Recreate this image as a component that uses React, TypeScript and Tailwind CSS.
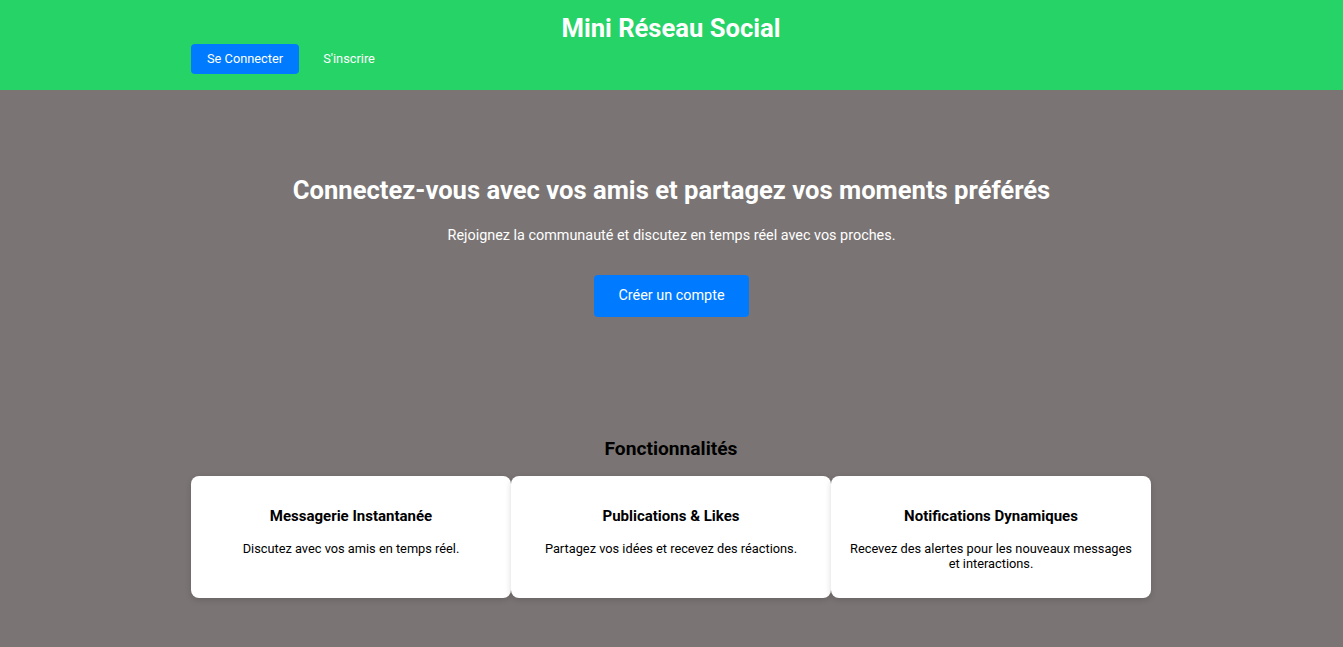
import React from "react";

const features = [
  { t: "Messagerie Instantanée", d: "Discutez avec vos amis en temps réel." },
  { t: "Publications & Likes", d: "Partagez vos idées et recevez des réactions." },
  { t: "Notifications Dynamiques", d: "Recevez des alertes pour les nouveaux messages et interactions." },
];

export default function App() {
  return (
    <div className="min-h-[647px] bg-[#7a7574] font-['Roboto',sans-serif]">
      <header className="bg-[#25d366] pt-[12px] pb-[16px]">
        <div className="mx-auto w-[961px] pr-[1px]">
          <h1 className="text-center text-[25.6px] font-bold leading-[32px] text-white">Mini Réseau Social</h1>
          <nav className="flex items-center gap-[8px]">
            <button className="h-[30px] rounded-[4px] bg-[#007bff] px-[16px] text-[12.8px] text-white">Se Connecter</button>
            <button className="h-[30px] px-[16px] text-[12.8px] text-white">S'inscrire</button>
          </nav>
        </div>
      </header>
      <section className="flex flex-col items-center pt-[85px] text-white">
        <h2 className="text-[25.6px] font-bold leading-[30px]">Connectez-vous avec vos amis et partagez vos moments préférés</h2>
        <p className="mt-[21px] text-[14.4px] leading-[20px]">Rejoignez la communauté et discutez en temps réel avec vos proches.</p>
        <button className="mt-[29px] h-[42px] rounded-[4px] bg-[#007bff] px-[24px] text-[14.4px] text-white">Créer un compte</button>
      </section>
      <section className="mx-auto mt-[120px] w-[961px] pr-[1px]">
        <h3 className="text-center text-[19.2px] font-bold leading-[24px] text-black">Fonctionnalités</h3>
        <div className="mt-[15px] grid grid-cols-3">
          {features.map((f) => (
            <div key={f.t} className="flex h-[122px] flex-col items-center rounded-[8px] bg-white px-[16px] pt-[31px] text-center shadow-[0_2px_6px_rgba(0,0,0,0.15)]">
              <h4 className="text-[15px] font-bold leading-[18px] text-black">{f.t}</h4>
              <p className="mt-[16px] text-[12.8px] leading-[15px] text-black">{f.d}</p>
            </div>
          ))}
        </div>
      </section>
    </div>
  );
}
